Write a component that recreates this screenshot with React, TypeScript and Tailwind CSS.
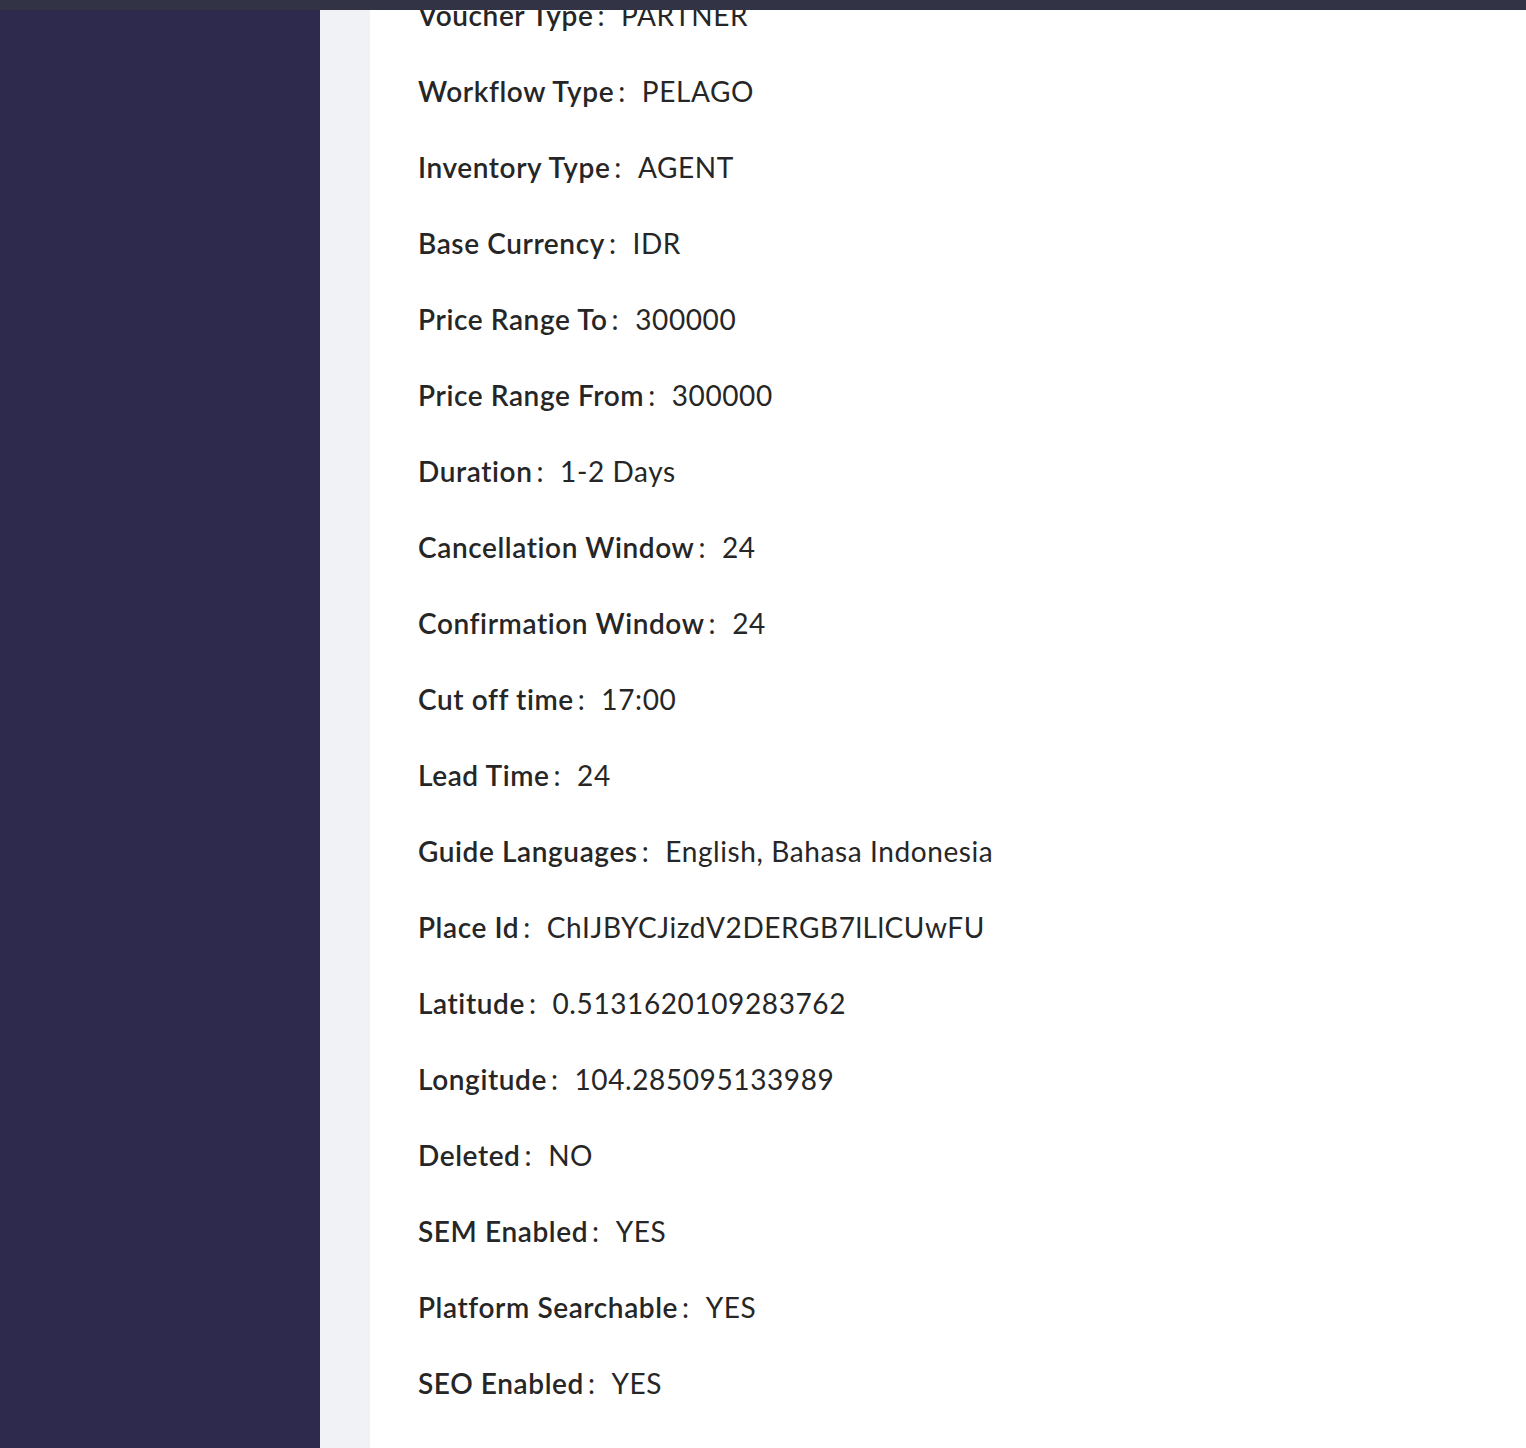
import React from "react";

const rows: [string, string][] = [
  ["Voucher Type", "PARTNER"],
  ["Workflow Type", "PELAGO"],
  ["Inventory Type", "AGENT"],
  ["Base Currency", "IDR"],
  ["Price Range To", "300000"],
  ["Price Range From", "300000"],
  ["Duration", "1-2 Days"],
  ["Cancellation Window", "24"],
  ["Confirmation Window", "24"],
  ["Cut off time", "17:00"],
  ["Lead Time", "24"],
  ["Guide Languages", "English, Bahasa Indonesia"],
  ["Place Id", "ChIJBYCJizdV2DERGB7lLlCUwFU"],
  ["Latitude", "0.5131620109283762"],
  ["Longitude", "104.285095133989"],
  ["Deleted", "NO"],
  ["SEM Enabled", "YES"],
  ["Platform Searchable", "YES"],
  ["SEO Enabled", "YES"],
];

export default function App() {
  return (
    <div className="h-[1448px] w-[1526px] flex flex-col overflow-hidden bg-white">
      <div className="h-[10px] shrink-0 bg-[#323446]" />
      <div className="flex flex-1 overflow-hidden">
        <div className="w-[320px] shrink-0 bg-[#2e2a4d]" />
        <div className="w-[50px] shrink-0 bg-[#f0f2f5]" />
        <div className="flex-1 overflow-hidden bg-white">
          <div className="mt-[-33px] pl-[48px] flex flex-col">
            {rows.map(([k, v]) => (
              <div
                key={k}
                className="h-[76px] flex items-center text-[28px] tracking-[0.6px] text-[#262626] font-['Lato',sans-serif]"
              >
                <span className="font-semibold">{k}</span>
                <span className="ml-[4px] mr-[16px]">:</span>
                <span>{v}</span>
              </div>
            ))}
          </div>
        </div>
      </div>
    </div>
  );
}
